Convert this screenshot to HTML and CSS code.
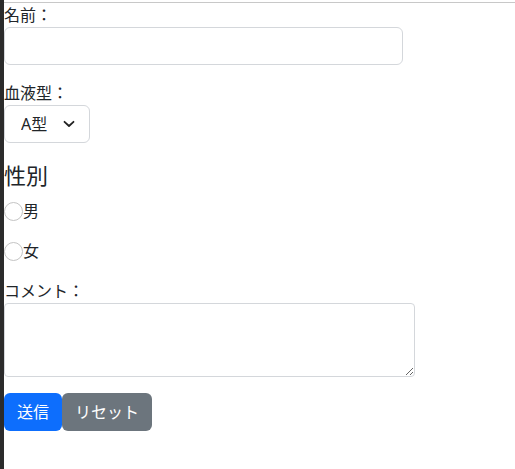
FILE: index.html
```html
<!DOCTYPE html>
<html lang="ja">
<head>
<meta charset="utf-8">
<link rel="stylesheet" href="styles.css">
</head>
<body>
<div class="strip"></div>
<main class="page">
  <form class="form">
    <div class="field">
      <label class="label">名前：</label>
      <input class="input" type="text">
    </div>
    <div class="field">
      <label class="label">血液型：</label>
      <div class="select-wrap">
        <select class="select">
          <option>A型</option>
          <option>B型</option>
          <option>O型</option>
          <option>AB型</option>
        </select>
        <svg class="chev" width="12" height="8" viewBox="0 0 12 8"><path d="M1.5 1.8 L6 6 L10.5 1.8" fill="none" stroke="#222" stroke-width="1.8" stroke-linecap="round" stroke-linejoin="round"/></svg>
      </div>
    </div>
    <h2 class="heading">性別</h2>
    <p class="radio-row"><input class="radio" type="radio" name="sex"><span>男</span></p>
    <p class="radio-row"><input class="radio" type="radio" name="sex"><span>女</span></p>
    <div class="field">
      <label class="label">コメント：</label>
      <textarea class="textarea"></textarea>
    </div>
    <div class="buttons">
      <button class="btn btn-primary" type="button">送信</button>
      <button class="btn btn-secondary" type="reset">リセット</button>
    </div>
  </form>
</main>
</body>
</html>
```
FILE: styles.css
```css
html, body {
  margin: 0;
  padding: 0;
  height: 100%;
}
body {
  display: flex;
  font-family: "Noto Sans", "Noto Sans CJK JP", sans-serif;
  font-size: 16px;
  line-height: 24px;
  color: #212529;
  background: #fff;
}
.strip {
  width: 4px;
  flex: none;
  background: #2b2b2b;
}
.page {
  flex: 1;
  border-top: 1px solid #c8c8c8;
  margin-top: 2px;
}
.form {
  display: flex;
  flex-direction: column;
  align-items: flex-start;
}
.field {
  display: flex;
  flex-direction: column;
  align-items: flex-start;
  margin-bottom: 16px;
}
.label {
  display: block;
  height: 24px;
}
.input {
  box-sizing: border-box;
  width: 399px;
  height: 38px;
  border: 1px solid #d4d7db;
  border-radius: 6px;
  margin: 0;
  font: inherit;
}
.select-wrap {
  position: relative;
}
.select {
  appearance: none;
  -webkit-appearance: none;
  box-sizing: border-box;
  width: 86px;
  height: 38px;
  margin: 0;
  padding: 0 0 0 16px;
  border: 1px solid #d4d7db;
  border-radius: 6px;
  background: #fff;
  font: inherit;
  color: #212529;
}
.chev {
  position: absolute;
  left: 59px;
  top: 15px;
  pointer-events: none;
}
.heading {
  margin: 3px 0 11px;
  font-size: 22px;
  line-height: 26px;
  font-weight: 400;
}
.radio-row {
  display: flex;
  align-items: center;
  margin: 0 0 16px;
  height: 24px;
}
.radio {
  appearance: none;
  -webkit-appearance: none;
  box-sizing: border-box;
  width: 19px;
  height: 19px;
  margin: 0;
  border: 1px solid #c4c4c4;
  border-radius: 50%;
  background: #fff;
}
.textarea {
  box-sizing: border-box;
  width: 411px;
  height: 74px;
  margin: 0;
  border: 1px solid #d4d7db;
  border-radius: 4px;
  font: inherit;
}
.buttons {
  display: flex;
}
.btn {
  height: 38px;
  padding: 0 12px;
  border: 1px solid transparent;
  border-radius: 6px;
  font: inherit;
  color: #fff;
  cursor: pointer;
}
.btn-primary {
  background: #0d6efd;
  width: 58px;
}
.btn-secondary {
  background: #6c757d;
  width: 90px;
}
```
